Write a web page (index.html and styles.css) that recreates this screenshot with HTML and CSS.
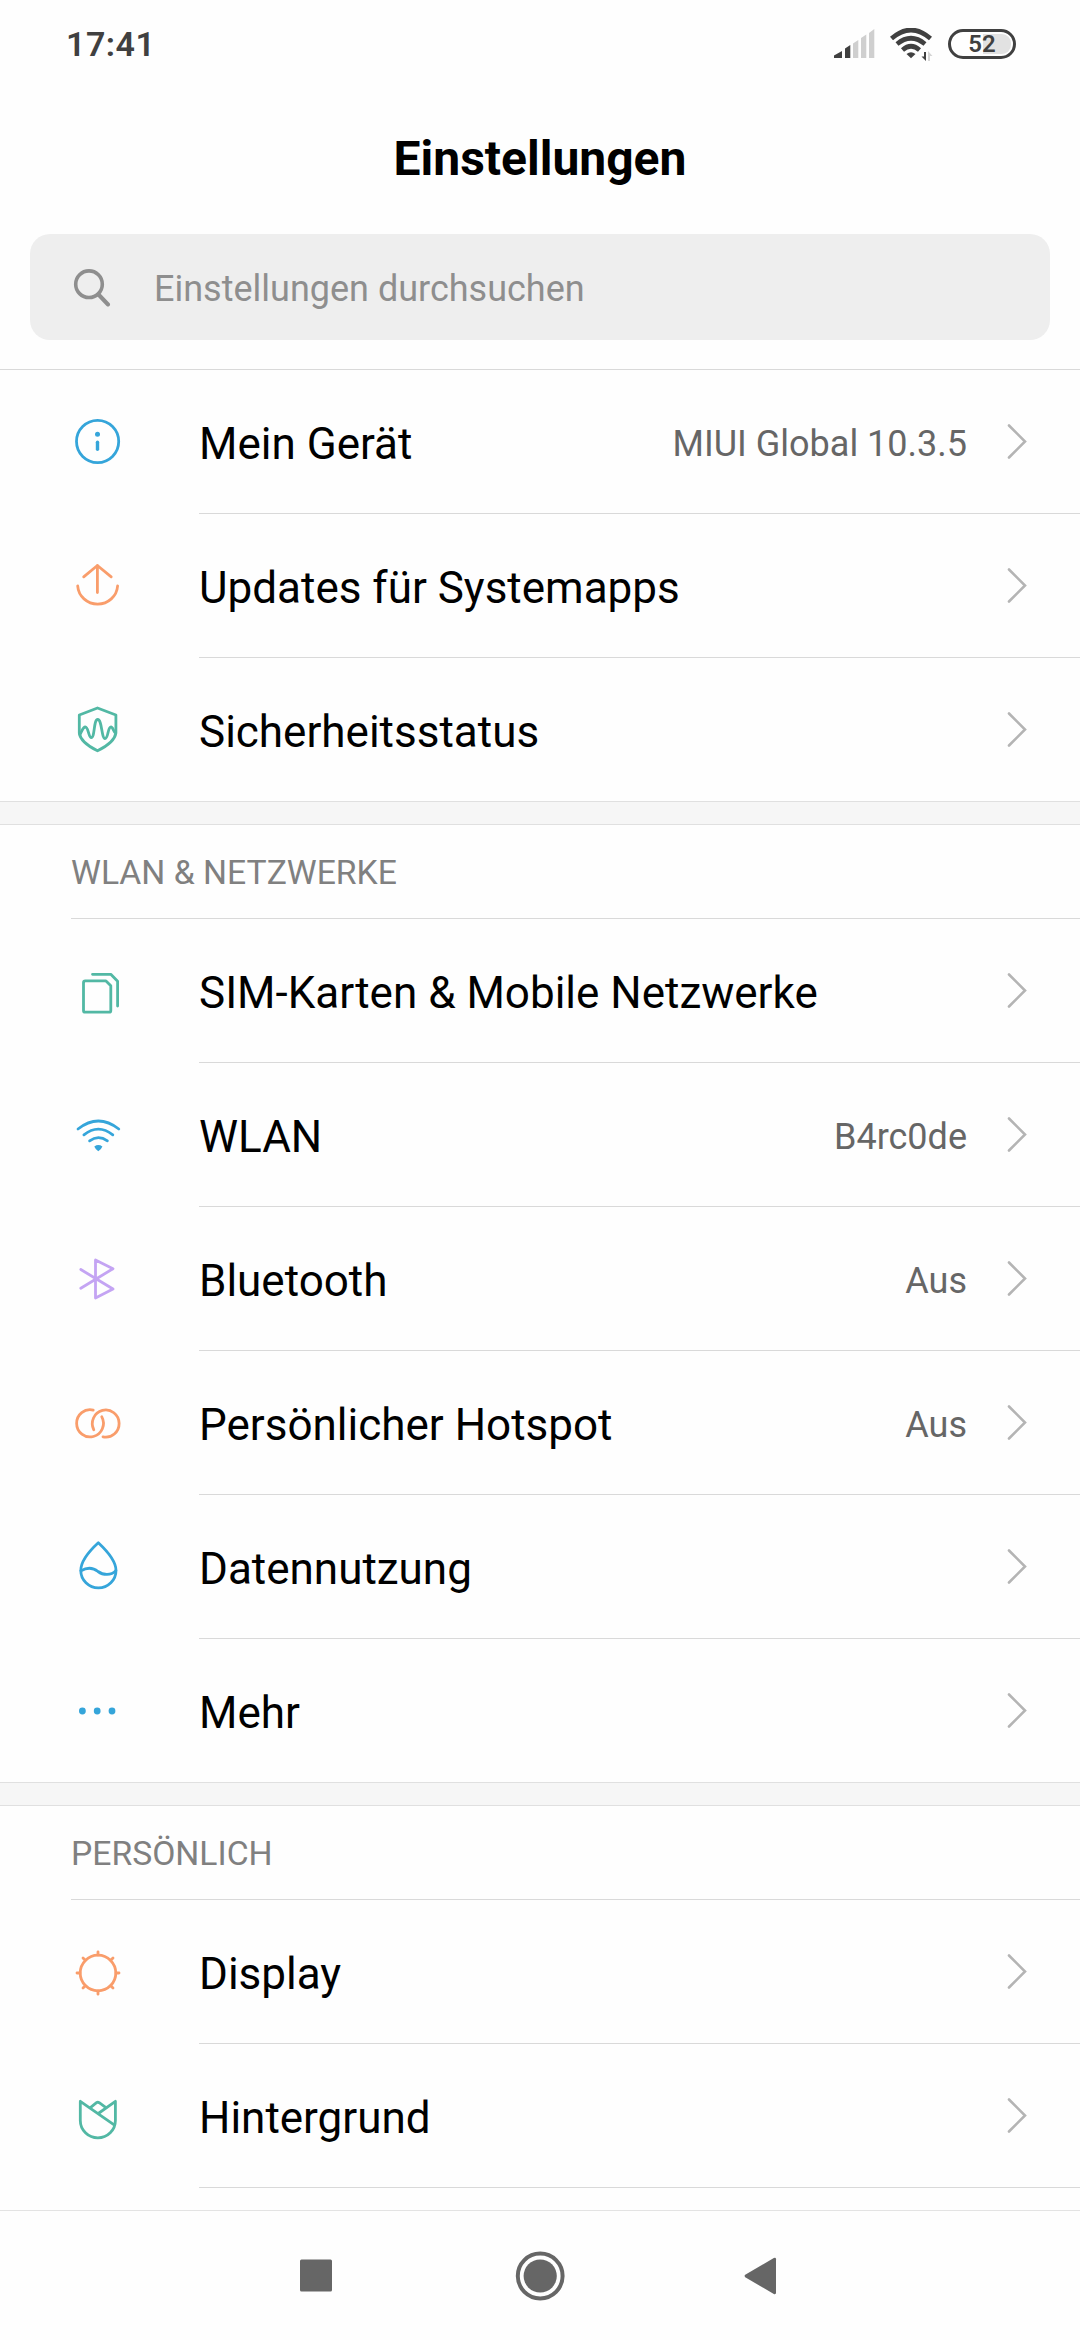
FILE: index.html
```html
<!DOCTYPE html>
<html lang="de">
<head>
    <meta charset="UTF-8">
    <meta name="viewport" content="width=device-width, initial-scale=1.0">
    <title>Einstellungen</title>

    <link rel="stylesheet" href="styles.css">
</head>
<body>
    <!-- Chevron shared by all rows -->
    <svg class="defs" width="0" height="0">
        <symbol id="chevron" viewBox="0 0 20 37">
            <path d="M2 2.5 L18 18.5 L2 34.5" fill="none" stroke="#b4b4b4" stroke-width="2.6" stroke-linecap="round"/>
        </symbol>
    </svg>

    <div class="status-bar">
        <span class="time">17:41</span>
        <div class="status-icons">
            <svg class="signal" width="41" height="30" viewBox="0 0 41 30">
                <path d="M0 29 V26.5 L8 22 V29 Z M11 29 V19.5 L16.3 16 V29 Z" fill="#404040"/>
                <path d="M19 29 V14.5 L24.3 11 V29 Z M27 29 V9 L32.3 5.5 V29 Z M35 29 V4 L40.3 0 V29 Z" fill="#cfcfcf"/>
            </svg>
            <svg class="wifi" width="44" height="34" viewBox="0 0 44 34">
                <g fill="none" stroke="#404040" stroke-width="4.6">
                    <path d="M1.5 10.5 Q21 -6.5 40.5 10.5"/>
                    <path d="M7 16 Q21 4.5 35 16"/>
                    <path d="M12.5 22 Q21 14.5 29.5 22"/>
                </g>
                <path d="M16.5 26 Q21 22.5 25.5 26 L21 30.3 Z" fill="#404040"/>
                <path d="M34 24 H36 V33 L31.5 28.5 H34 Z" fill="#404040"/>
                <path d="M38 23 L42.5 28 H40 V33 H38 Z" fill="#d5d5d5"/>
            </svg>
            <div class="battery"><span>52</span></div>
        </div>
    </div>

    <h1 class="page-title">Einstellungen</h1>

    <div class="search">
        <svg width="38" height="39" viewBox="0 0 38 39">
            <circle cx="16" cy="16.2" r="13.3" fill="none" stroke="#8e8e8e" stroke-width="3.6"/>
            <path d="M25.5 26.5 L35 36.5" stroke="#8e8e8e" stroke-width="4" stroke-linecap="round"/>
        </svg>
        <span>Einstellungen durchsuchen</span>
    </div>

    <div class="list">
        <!-- Gerät -->
        <div class="section">
            <div class="row">
                <svg class="icon blue" viewBox="0 0 61 61">
                    <circle cx="30.6" cy="30.5" r="21.1"/>
                    <circle class="fill" cx="30.5" cy="23.2" r="2.5"/>
                    <path d="M30.5 31.2 V38.2" stroke-width="3.4"/>
                </svg>
                <div class="row-body">
                    <span class="label">Mein Gerät</span>
                    <span class="value">MIUI Global 10.3.5</span>
                    <svg class="chevron"><use href="#chevron"/></svg>
                </div>
            </div>
            <div class="row">
                <svg class="icon orange" viewBox="0 0 61 61">
                    <path d="M30.4 37.5 V10.5 M16.7 21.8 L30.4 10.5 L44.2 21.8"/>
                    <path d="M10.7 31 A20 19.5 0 0 0 50.6 31"/>
                </svg>
                <div class="row-body">
                    <span class="label">Updates für Systemapps</span>
                    <svg class="chevron"><use href="#chevron"/></svg>
                </div>
            </div>
            <div class="row">
                <svg class="icon green" viewBox="0 0 61 61">
                    <path d="M30.5 9 L48.9 16 V34 Q47.5 43.5 30.5 51.8 Q13.5 43.5 12.3 34 V16 Z"/>
                    <path d="M12.8 35.5 C15 33 15.5 28 18.3 28 C21.5 28 21.5 38.5 24.3 38.5 C28 38.5 26.5 20.5 30.7 20.5 C35 20.5 34.5 39.5 38 39.5 C41.5 39.5 40.5 28 44 28 C46 28 46.5 33 48.5 34"/>
                </svg>
                <div class="row-body">
                    <span class="label">Sicherheitsstatus</span>
                    <svg class="chevron"><use href="#chevron"/></svg>
                </div>
            </div>
        </div>

        <!-- WLAN & Netzwerke -->
        <div class="section">
            <h2 class="section-header"><span>WLAN &amp; NETZWERKE</span></h2>
            <div class="row">
                <svg class="icon green" viewBox="0 0 61 61">
                    <path d="M18.3 20.9 H39 L43.8 25.7 V50.4 Q43.8 52.2 42 52.2 H18.3 Q16.5 52.2 16.5 50.4 V22.7 Q16.5 20.9 18.3 20.9 Z"/>
                    <path d="M25.5 14.3 H43.8 L50.6 21.3 V46"/>
                </svg>
                <div class="row-body">
                    <span class="label">SIM-Karten &amp; Mobile Netzwerke</span>
                    <svg class="chevron"><use href="#chevron"/></svg>
                </div>
            </div>
            <div class="row">
                <svg class="icon blue" viewBox="0 0 61 61">
                    <path d="M11 25 Q31.3 9 51.8 25 M16.9 30.8 Q31.3 19.4 45.8 30.8 M22.6 36.8 Q31.3 30.4 40.4 36.8"/>
                    <path class="fill" d="M27.3 42.4 Q31.3 39.6 35.4 42.4 Q34.5 45 31.3 47.2 Q28.2 45 27.3 42.4 Z"/>
                </svg>
                <div class="row-body">
                    <span class="label">WLAN</span>
                    <span class="value">B4rc0de</span>
                    <svg class="chevron"><use href="#chevron"/></svg>
                </div>
            </div>
            <div class="row">
                <svg class="icon purple" viewBox="0 0 61 61">
                    <path d="M13.8 40.2 L46 20.7 L28.5 12 V50 L46 41 L13.8 21.5"/>
                </svg>
                <div class="row-body">
                    <span class="label">Bluetooth</span>
                    <span class="value">Aus</span>
                    <svg class="chevron"><use href="#chevron"/></svg>
                </div>
            </div>
            <div class="row">
                <svg class="icon orange" viewBox="0 0 61 61">
                    <path d="M26.2 18.1 A13.4 13.6 0 1 0 34.8 24.8"/>
                    <path d="M26.8 37.8 A13.4 13.6 0 1 1 36 44.9"/>
                </svg>
                <div class="row-body">
                    <span class="label">Persönlicher Hotspot</span>
                    <span class="value">Aus</span>
                    <svg class="chevron"><use href="#chevron"/></svg>
                </div>
            </div>
            <div class="row">
                <svg class="icon blue" viewBox="0 0 61 61">
                    <path d="M31.3 6.8 C38.5 13.5 49 24.5 49 34.5 A17.6 17.4 0 0 1 13.8 34.5 C13.8 24.5 24 13.5 31.3 6.8 Z"/>
                    <path d="M14 34.8 C20 31.3 26 31.5 31 35.5 C36 39.2 44 39.8 48.8 34.8"/>
                </svg>
                <div class="row-body">
                    <span class="label">Datennutzung</span>
                    <svg class="chevron"><use href="#chevron"/></svg>
                </div>
            </div>
            <div class="row">
                <svg class="icon blue" viewBox="0 0 61 61">
                    <circle class="fill" cx="15.4" cy="31" r="3.4"/>
                    <circle class="fill" cx="30.2" cy="31" r="3.4"/>
                    <circle class="fill" cx="45" cy="31" r="3.4"/>
                </svg>
                <div class="row-body">
                    <span class="label">Mehr</span>
                    <svg class="chevron"><use href="#chevron"/></svg>
                </div>
            </div>
        </div>

        <!-- Persönlich -->
        <div class="section">
            <h2 class="section-header"><span>PERSÖNLICH</span></h2>
            <div class="row">
                <svg class="icon orange" viewBox="0 0 61 61">
                    <circle cx="31" cy="32" r="17.8"/>
                    <path d="M31 14 V10.8 M31 50 V53.2 M13 32 H10 M49 32 H52 M18.3 19.3 L16 17 M43.7 19.3 L46 17 M18.3 44.7 L16 47 M43.7 44.7 L46 47"/>
                </svg>
                <div class="row-body">
                    <span class="label">Display</span>
                    <svg class="chevron"><use href="#chevron"/></svg>
                </div>
            </div>
            <div class="row">
                <svg class="icon green" viewBox="0 0 61 61">
                    <path d="M13.3 15.3 L47.5 39.2 M31.3 27.5 L48.4 15.3 V34.5 A17.55 17.3 0 0 1 13.3 34.5 V15.3"/>
                    <path d="M23.7 21.3 L29.5 16.7 Q30.8 15.8 32.2 16.7 L38.6 21.3"/>
                </svg>
                <div class="row-body">
                    <span class="label">Hintergrund</span>
                    <svg class="chevron"><use href="#chevron"/></svg>
                </div>
            </div>
        </div>
    </div>

    <div class="nav-bar">
        <svg viewBox="0 0 50 50"><rect x="9" y="8.5" width="32" height="32" rx="1.5"/></svg>
        <svg viewBox="0 0 50 50">
            <circle class="ring" cx="25.2" cy="25" r="22.4"/>
            <circle cx="25.2" cy="25" r="16.6"/>
        </svg>
        <svg viewBox="0 0 50 50"><path d="M6.2 23.8 L34.8 7 Q37 6.2 37 8.2 V41.8 Q37 43.8 34.8 43 L6.2 26.2 Q5 25 6.2 23.8 Z"/></svg>
    </div>
</body>
</html>
```
FILE: styles.css
```css
* {
    margin: 0;
    padding: 0;
    box-sizing: border-box;
}

body {
    width: 1080px;
    height: 2340px;
    display: flex;
    flex-direction: column;
    overflow: hidden;
    font-family: Roboto, 'Noto Sans', sans-serif;
    background: #fefefe;
    color: #000;
}

svg { display: block; flex-shrink: 0; }
.defs { position: absolute; }

/* Status bar */
.status-bar { height: 88px; padding: 0 64px 1px 66px; display: flex; align-items: center; justify-content: space-between; }
.time { font-size: 34px; font-weight: 600; letter-spacing: 0.5px; color: #404040; }
.status-icons { display: flex; align-items: center; }
.signal { margin-right: 15px; }
.wifi { margin: 3px 14px 0 0; }
.battery { width: 68px; height: 30px; border: 3.5px solid #404040; border-radius: 15px; padding: 2px; display: flex; }
.battery span { flex: 1; border-radius: 9px; background: linear-gradient(90deg, #fefefe 52%, #e2e2e2 52%); color: #404040; font-size: 24px; font-weight: 600; line-height: 21px; text-align: center; }

/* Title and search */
.page-title { height: 146px; display: flex; justify-content: center; font-size: 48px; font-weight: 700; line-height: 141px; }
.search { height: 106px; margin: 0 30px 29px; padding-left: 43px; display: flex; align-items: center; border-radius: 20px; background: #eee; color: #8e8e8e; font-size: 36px; }
.search span { margin-left: 43px; padding-top: 4px; }

/* Settings list */
.list { flex: 1; min-height: 0; overflow: hidden; border-top: 1px solid #d9d9d9; }
.section:not(:last-child) { border-bottom: 22px solid #f6f6f6; }
.section-header { height: 95px; padding-left: 71px; border-top: 1px solid #e0e0e0; font-size: 33.7px; font-weight: 400; line-height: 95px; color: #808080; }
.section-header span { display: block; height: 94px; border-bottom: 1px solid #d9d9d9; }
.row { height: 144px; padding-left: 67px; display: flex; align-items: center; }
.row-body { flex: 1; height: 144px; margin-left: 71px; padding-right: 53px; display: flex; align-items: center; border-bottom: 1px solid #d9d9d9; }
.section:not(:last-child) .row:last-child { border-bottom: 1px solid #e0e0e0; }
.section:not(:last-child) .row:last-child .row-body { height: 143px; border-bottom: none; }
.label { flex: 1; padding-top: 5px; font-size: 44px; }
.value { padding-top: 4px; font-size: 36px; color: #666; }
.chevron { width: 20px; height: 37px; margin-left: 40px; }

/* Row icons */
.icon { width: 61px; height: 61px; margin-bottom: 1px; fill: none; stroke: currentColor; stroke-width: 2.8; stroke-linecap: round; stroke-linejoin: round; }
.icon .fill { fill: currentColor; stroke: none; }
.row:last-child .icon { margin-bottom: 0; }
.blue { color: #35a5da; }
.orange { color: #f99d6b; }
.green { color: #52b8a4; }
.purple { color: #c4a4f3; }

/* Navigation buttons */
.nav-bar { height: 130px; padding-left: 291px; display: flex; align-items: center; gap: 174px; border-top: 1px solid #e3e3e3; }
.nav-bar svg { width: 50px; height: 50px; fill: #666; }
.nav-bar .ring { fill: none; stroke: #666; stroke-width: 4; }
```
